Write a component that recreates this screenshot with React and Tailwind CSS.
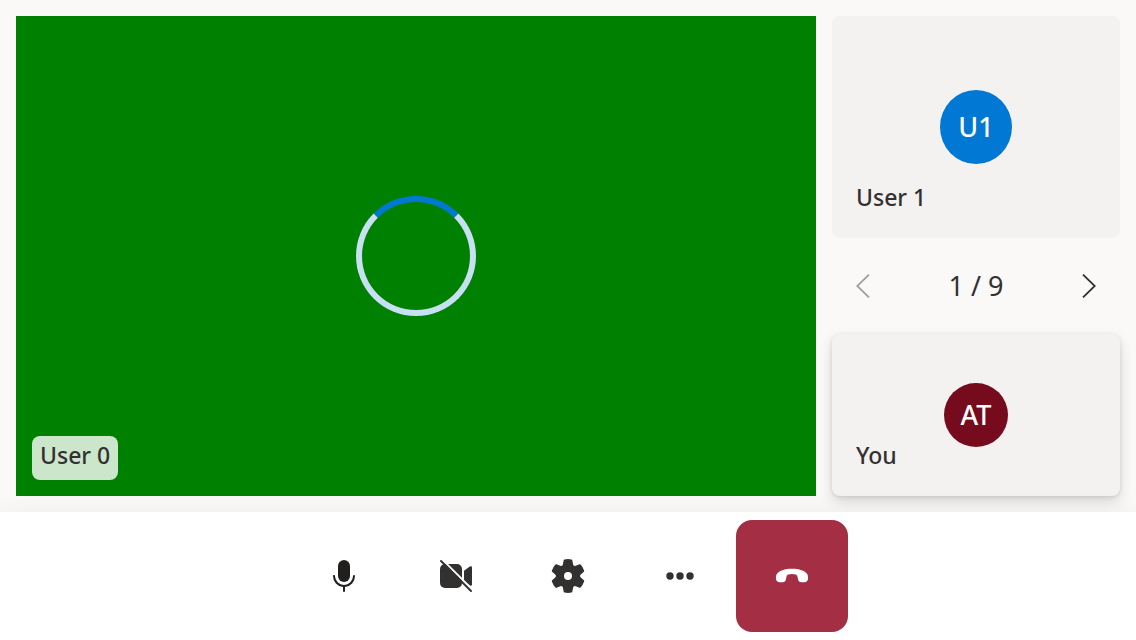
import React from 'react';

function Icon({ children }) {
  return (
    <svg viewBox="0 0 20 20" className="size-10" fill="currentColor" aria-hidden="true">
      {children}
    </svg>
  );
}

function MicIcon() {
  return (
    <Icon>
      <rect x="7" y="2" width="6" height="11" rx="3" />
      <path d="M5 9.5c.28 0 .5.22.5.5a4.5 4.5 0 0 0 9 0 .5.5 0 0 1 1 0 5.5 5.5 0 0 1-5 5.48v2.02a.5.5 0 0 1-1 0v-2.02A5.5 5.5 0 0 1 4.5 10c0-.28.22-.5.5-.5Z" />
    </Icon>
  );
}

function VideoOffIcon() {
  return (
    <Icon>
      <rect x="2" y="4" width="11" height="12" rx="2.5" />
      <path d="M14 7.4l2.9-2.1c.5-.3 1.1 0 1.1.5v8.5c0 .5-.6.8-1.1.5L14 12.6Z" />
      <path d="M3.2 1.8L18.9 17.5" stroke="#fff" strokeWidth="1" />
      <path d="M2.5 2.5L17.5 17.5" stroke="currentColor" strokeWidth="1" strokeLinecap="round" />
    </Icon>
  );
}

function SettingsIcon() {
  return (
    <Icon>
      <path
        fillRule="evenodd"
        d="M1.91 7.38A8.5 8.5 0 0 1 3.69 4.3a.5.5 0 0 1 .54-.13l1.92.68a1 1 0 0 0 1.32-.76l.36-2a.5.5 0 0 1 .4-.4 8.53 8.53 0 0 1 3.55 0c.2.04.35.2.38.4l.37 2a1 1 0 0 0 1.32.76l1.92-.68a.5.5 0 0 1 .54.13 8.5 8.5 0 0 1 1.78 3.08c.06.2 0 .4-.15.54l-1.56 1.32a1 1 0 0 0 0 1.52l1.56 1.32a.5.5 0 0 1 .15.54 8.5 8.5 0 0 1-1.78 3.08.5.5 0 0 1-.54.13l-1.92-.68a1 1 0 0 0-1.32.76l-.37 2a.5.5 0 0 1-.38.4 8.53 8.53 0 0 1-3.56 0 .5.5 0 0 1-.39-.4l-.36-2a1 1 0 0 0-1.32-.76l-1.92.68a.5.5 0 0 1-.54-.13 8.5 8.5 0 0 1-1.78-3.08.5.5 0 0 1 .15-.54l1.56-1.32a1 1 0 0 0 0-1.52L2.06 7.92a.5.5 0 0 1-.15-.54ZM8 10a2 2 0 1 0 4 0 2 2 0 0 0-4 0Z"
      />
    </Icon>
  );
}

function MoreIcon() {
  return (
    <Icon>
      <circle cx="5" cy="10" r="1.85" />
      <circle cx="10" cy="10" r="1.85" />
      <circle cx="15" cy="10" r="1.85" />
    </Icon>
  );
}

function HangUpIcon() {
  return (
    <Icon>
      <path d="M10 6.4c3.7 0 6.4 1 7.5 2.5.5.7.6 1.6.5 2.6-.1 1-.8 1.6-1.8 1.6h-1.6c-.8 0-1.4-.5-1.5-1.2l-.4-1.7c-.1-.6-.4-.9-.9-1a8 8 0 0 0-3.6 0c-.5.1-.8.4-.9 1l-.4 1.7c-.1.7-.7 1.2-1.5 1.2H3.8c-1 0-1.7-.6-1.8-1.6-.1-1 0-1.9.5-2.6C3.6 7.4 6.3 6.4 10 6.4Z" />
    </Icon>
  );
}

function Chevron({ d }) {
  return (
    <svg viewBox="0 0 14 24" className="h-6 w-[14px]" fill="none" stroke="currentColor" strokeWidth="1.8" aria-hidden="true">
      <path d={d} />
    </svg>
  );
}

function NameTag({ children, className = '' }) {
  return (
    <span className={`absolute bottom-4 left-4 flex h-11 items-center rounded-lg px-2 pb-1.5 text-[23px] leading-8 font-medium ${className}`}>
      {children}
    </span>
  );
}

function ControlButton({ label, className = '', children }) {
  return (
    <button type="button" aria-label={label} className={`flex size-28 items-center justify-center rounded-2xl ${className}`}>
      {children}
    </button>
  );
}

export default function App() {
  return (
    <div className="flex min-h-screen flex-col bg-[#faf9f8] font-['Noto_Sans','Open_Sans',sans-serif] text-[#323130]">
      <main className="flex flex-1 gap-4 p-4">
        <section aria-label="User 0" className="relative flex flex-1 items-center justify-center bg-[#008000]">
          <div role="status" aria-label="Loading" className="size-[120px] rounded-full border-[6px] border-[#c7e0f4] border-t-[#0078d4]" />
          <NameTag className="bg-white/80">User 0</NameTag>
        </section>
        <aside className="flex w-72 shrink-0 flex-col">
          <section aria-label="User 1" className="relative flex flex-1 items-center justify-center rounded-lg bg-[#f3f2f1]">
            <div className="flex h-[74px] w-[72px] items-center justify-center rounded-[50%] bg-[#0078d4] text-[27px] leading-9 font-medium text-white">U1</div>
            <NameTag>User 1</NameTag>
          </section>
          <nav aria-label="Participant pages" className="flex h-24 items-center justify-between px-6">
            <button type="button" disabled aria-label="Previous page" className="text-[#a19f9d]">
              <Chevron d="M13 .6L1.2 12 13 23.4" />
            </button>
            <span className="text-[27px] leading-9">1 / 9</span>
            <button type="button" aria-label="Next page">
              <Chevron d="M1 .6L12.8 12 1 23.4" />
            </button>
          </nav>
          <section aria-label="You" className="relative flex aspect-video items-center justify-center rounded-lg bg-[#f3f2f1] shadow-[0_6px_14px_rgba(0,0,0,0.132),0_1px_4px_rgba(0,0,0,0.108)]">
            <div className="flex size-16 items-center justify-center rounded-full bg-[#750b1c] text-[27px] leading-9 font-medium text-white">AT</div>
            <NameTag>You</NameTag>
          </section>
        </aside>
      </main>
      <footer className="relative flex justify-center bg-white p-2 shadow-[0_6px_28px_rgba(0,0,0,0.08)]">
        <ControlButton label="Mute" className="text-[#201f1e]"><MicIcon /></ControlButton>
        <ControlButton label="Turn on camera"><VideoOffIcon /></ControlButton>
        <ControlButton label="Settings"><SettingsIcon /></ControlButton>
        <ControlButton label="More options"><MoreIcon /></ControlButton>
        <ControlButton label="Leave call" className="bg-[#a42e43] text-white"><HangUpIcon /></ControlButton>
      </footer>
    </div>
  );
}
